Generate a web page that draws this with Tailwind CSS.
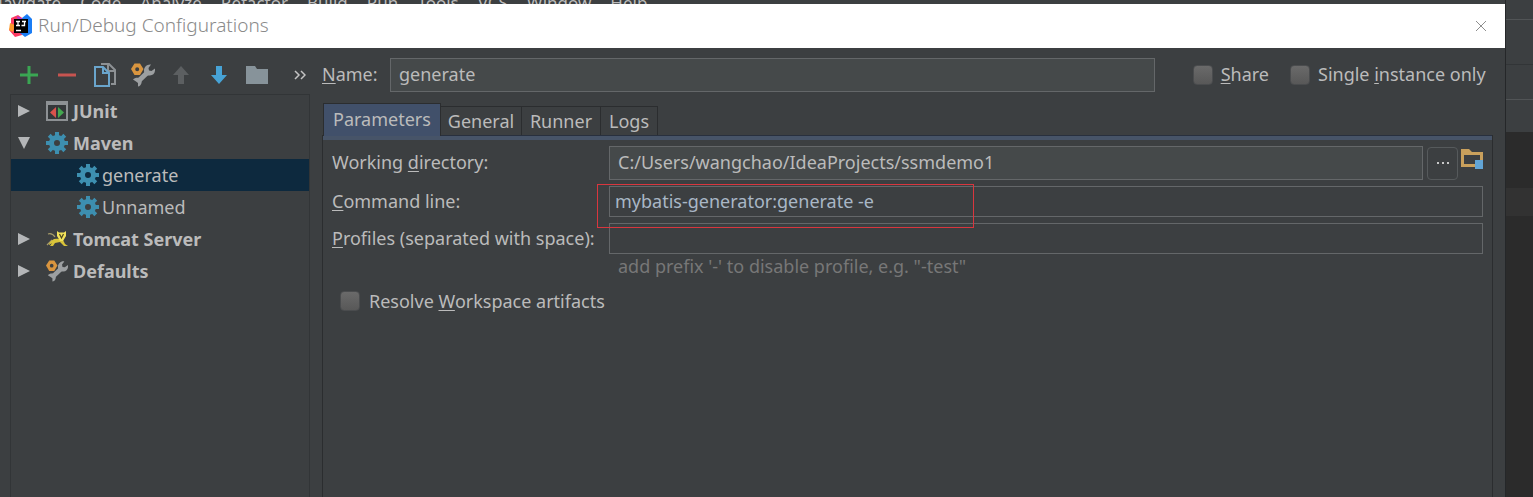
<!DOCTYPE html>
<html lang="en">
<head>
  <meta charset="UTF-8" />
  <meta name="viewport" content="width=device-width, initial-scale=1.0"/>
  <title>Run/Debug Configurations</title>
  <script src="https://cdn.jsdelivr.net/npm/@tailwindcss/browser@4"></script>
</head>
<body class="min-h-screen flex flex-col bg-[#3c3f41] text-[#bbbbbb] text-[18px] leading-6 font-['Noto_Sans','Open_Sans',sans-serif] overflow-hidden">

  <!-- shared icons -->
  <svg class="hidden">
    <symbol id="gear" viewBox="0 0 22 22">
      <g fill="#3d8fb0">
        <path fill-rule="evenodd" d="M11 3a8 8 0 1 1 0 16 8 8 0 0 1 0-16zm0 5a3 3 0 1 0 0 6 3 3 0 0 0 0-6z"/>
        <path d="M9 0h4v4H9zM9 18h4v4H9zM0 9h4v4H0zM18 9h4v4h-4z"/>
        <path d="M9 0h4v4H9zM9 18h4v4H9zM0 9h4v4H0zM18 9h4v4h-4z" transform="rotate(45 11 11)"/>
      </g>
    </symbol>
    <symbol id="wrench" viewBox="0 0 24 24">
      <path d="M8 17.500 17 9" stroke="#9c9fa1" stroke-width="5" fill="none"/>
      <path d="M20 1.500 17.500 5l.5 2.500 2.500.5 3.500-2.500c.5 4-1.500 7-5 7-3.500.4-6-1.500-6-5 0-3.500 3-6.500 7-6z" fill="#9c9fa1"/>
      <path d="M2 16.500c2-2 6-2.500 8 0 1.500 2 .5 6.500-3 7V20l-2-1.500z" fill="#9c9fa1"/>
      <path fill-rule="evenodd" d="M3.500.5h5.500l3.500 5.500-3.500 6H3.500L0 6z M6.200 4.200a2 2 0 1 0 0 4 2 2 0 0 0 0-4z" fill="#d9953f"/>
    </symbol>
  </svg>

  <div class="flex grow">
    <div class="flex flex-col grow min-w-0">

      <!-- menu bar, mostly covered by the dialog -->
      <nav class="h-1 overflow-hidden flex items-end gap-[19px] bg-[#3c3f41] text-[17px] whitespace-nowrap">
        <span class="-ml-[10px] -mb-[11px]">Navigate</span>
        <span class="-mb-[11px]">Code</span>
        <span class="-mb-[11px]">Analyze</span>
        <span class="-mb-[11px]">Refactor</span>
        <span class="-mb-[11px]">Build</span>
        <span class="-mb-[11px]">Run</span>
        <span class="-mb-[11px]">Tools</span>
        <span class="-mb-[11px]">VCS</span>
        <span class="-mb-[11px]">Window</span>
        <span class="-mb-[11px]">Help</span>
      </nav>

      <!-- title bar -->
      <header class="h-11 bg-white flex items-center pl-[9px] pr-[18px]">
        <svg class="w-6 h-6" viewBox="0 0 24 24">
          <path d="M2 4 9 1l7 5-3 15-7 2-6-7 2-4z" fill="#fc3b64"/>
          <path d="M1 9l5 2-2 7-4-2z" fill="#fd9a2b"/>
          <path d="M13 4l5-4 5 5v14l-7 4-5-4z" fill="#1a7df5"/>
          <path d="M8 2l6 3-5 3z" fill="#b33bd0"/>
          <path d="M5 5h14v14H5z" fill="#000"/>
          <path d="M7 7.500h4M9 7.500v4M7 11.500h4M13 7.500h4M15.500 7.500v4h-3M7 16.500h5" stroke="#fff" stroke-width="1.300" fill="none"/>
        </svg>
        <h1 class="ml-[5px] pb-[2px] text-[19px] text-[#8a8a8a] font-light">Run/Debug Configurations</h1>
        <button class="ml-auto p-0" aria-label="Close">
          <svg class="w-3 h-3" viewBox="0 0 12 12"><path d="M1 1l10 10M11 1 1 11" stroke="#8e8e8e" fill="none"/></svg>
        </button>
      </header>

      <div class="flex grow">

        <!-- left: toolbar + tree -->
        <aside class="w-[322px] shrink-0 pl-[10px] pr-3 flex flex-col">
          <div class="flex items-center h-[46px] pt-2">
            <button class="w-[38px] shrink-0 flex justify-center" aria-label="Add"><svg class="w-[18px] h-[18px]" viewBox="0 0 18 18"><path d="M9 0v18M0 9h18" stroke="#3aa653" stroke-width="3"/></svg></button>
            <button class="w-[38px] shrink-0 flex justify-center" aria-label="Remove"><svg class="w-[18px] h-[18px]" viewBox="0 0 18 18"><path d="M0 9h18" stroke="#c75450" stroke-width="3"/></svg></button>
            <button class="w-[38px] shrink-0 flex justify-center" aria-label="Copy">
              <svg class="w-[22px] h-6" viewBox="0 0 22 24" fill="none" stroke-width="2">
                <path d="M7 1h8l6 6v14h-4M14 1v7h7" stroke="#8d9194"/>
                <path d="M1 4h8l6 6v13H1z" fill="#3c3f41" stroke="#6aa5cc"/><path d="M9 4v6h6" stroke="#6aa5cc"/>
              </svg>
            </button>
            <button class="w-[38px] shrink-0 flex justify-center" aria-label="Edit defaults"><svg class="w-6 h-6"><use href="#wrench"/></svg></button>
            <button class="w-[38px] shrink-0 flex justify-center" aria-label="Move up"><svg class="w-4 h-[18px]" viewBox="0 0 16 18"><path d="M8 0l8 9h-5v9H5V9H0z" fill="#5c5f61"/></svg></button>
            <button class="w-[38px] shrink-0 flex justify-center" aria-label="Move down"><svg class="w-4 h-[18px]" viewBox="0 0 16 18"><path d="M8 18l8-9h-5V0H5v9H0z" fill="#47a3d6"/></svg></button>
            <button class="w-[38px] shrink-0 flex justify-center" aria-label="New folder"><svg class="w-[22px] h-[18px]" viewBox="0 0 22 18"><path d="M0 0h9l2 3h11v15H0z" fill="#87939a"/></svg></button>
            <button class="grow flex justify-end pr-1" aria-label="More"><svg class="w-3 h-[10px]" viewBox="0 0 12 10"><path d="M1 1l4 4-4 4M7 1l4 4-4 4" stroke="#c4c4c4" stroke-width="1.500" fill="none"/></svg></button>
          </div>

          <ul class="grow border border-b-0 border-[#323537]">
            <li class="h-8 flex items-center pl-[7px] font-bold">
              <svg class="w-3 h-3 mr-4" viewBox="0 0 12 12"><path d="M0 0l12 6-12 6z" fill="#b4b6b8"/></svg>
              <svg class="w-[22px] h-5 mr-[5px]" viewBox="0 0 22 20"><path d="M1 1h20v18H1z" fill="#34383a" stroke="#8d9194" stroke-width="2"/><path d="M0 0h22v4H0z" fill="#8d9194"/><path d="M10 6v11l-6-5.500z" fill="#d9534c"/><path d="M12 6v11l6-5.500z" fill="#43a84f"/></svg>
              JUnit
            </li>
            <li class="h-8 flex items-center pl-[7px] font-bold">
              <svg class="w-3 h-3 mr-4" viewBox="0 0 12 12"><path d="M0 0h12L6 12z" fill="#b4b6b8"/></svg>
              <svg class="w-[22px] h-[22px] mr-[5px]"><use href="#gear"/></svg>
              Maven
            </li>
            <li class="h-8 flex items-center pl-[66px] bg-[#0d293e]"><svg class="w-[22px] h-[22px] mr-[3px]"><use href="#gear"/></svg>generate</li>
            <li class="h-8 flex items-center pl-[66px]"><svg class="w-[22px] h-[22px] mr-[3px]"><use href="#gear"/></svg>Unnamed</li>
            <li class="h-8 flex items-center pl-[7px] font-bold">
              <svg class="w-3 h-3 mr-4" viewBox="0 0 12 12"><path d="M0 0l12 6-12 6z" fill="#b4b6b8"/></svg>
              <svg class="w-[22px] h-4 mr-[5px]" viewBox="0 0 22 16">
                <path d="M2 3c3-1 5 0 7 3M1 14l5-5" stroke="#a89c6a" stroke-width="1.200" fill="none"/>
                <path d="M3 13c2-4 5-6 10-5l4 1 2 4 3 2h-4l-4-4-5 1-2 3H4l2-3-3 2z" fill="#d9c43a"/>
                <path d="M11 0l2 1.500h5L20 0v5l-3 5h-3l-3-5z" fill="#f2e25a"/>
                <path d="M13.500 3l2 4 2-4" stroke="#4a4520" stroke-width="1.200" fill="none"/>
              </svg>
              Tomcat Server
            </li>
            <li class="h-8 flex items-center pl-[7px] font-bold">
              <svg class="w-3 h-3 mr-4" viewBox="0 0 12 12"><path d="M0 0l12 6-12 6z" fill="#b4b6b8"/></svg>
              <svg class="w-[22px] h-[22px] mr-[5px]"><use href="#wrench"/></svg>
              Defaults
            </li>
          </ul>
        </aside>

        <!-- right: configuration form -->
        <main class="grow min-w-0 flex flex-col pr-3">
          <div class="flex items-center pt-[10px] pr-[3px]">
            <label for="name" class="w-[68px] pb-[2px]"><u class="underline-offset-2">N</u>ame:</label>
            <input id="name" type="text" value="generate" class="grow min-w-0 h-[34px] px-2 pb-[2px] bg-[#45494a] border border-[#646769]">
            <input id="share" type="checkbox" class="appearance-none ml-[38px] size-5 rounded-sm bg-linear-to-b from-[#6a6a6a] to-[#585858] border border-[#4a4c4e]">
            <label for="share" class="ml-2 pb-[2px]"><u class="underline-offset-2">S</u>hare</label>
            <input id="single" type="checkbox" class="appearance-none ml-[21px] size-5 rounded-sm bg-linear-to-b from-[#6a6a6a] to-[#585858] border border-[#4a4c4e]">
            <label for="single" class="ml-2 w-[172px] pb-[2px]">Single <u class="underline-offset-2">i</u>nstance only</label>
          </div>

          <div class="flex items-end mt-[11px] pl-px" role="tablist">
            <button role="tab" aria-selected="true" class="relative h-[33px] -mb-px w-[118px] pb-[2px] bg-[#41506a] border border-b-0 border-[#2b2d2f]">Parameters</button>
            <button role="tab" class="h-[29px] w-[81px] border border-l-0 border-b-0 border-[#2b2d2f]">General</button>
            <button role="tab" class="h-[29px] w-[79px] border border-l-0 border-b-0 border-[#2b2d2f]">Runner</button>
            <button role="tab" class="h-[29px] w-[57px] border border-l-0 border-b-0 border-[#2b2d2f]">Logs</button>
          </div>

          <section class="grow border-x border-[#2b2d2f]">
            <div class="h-[5px] bg-[#475468] border-t border-[#28303e]"></div>
            <div class="pt-[6px] pl-[9px] pr-[9px]">
              <div class="flex items-center">
                <label for="dir" class="w-[277px] shrink-0 pb-[2px]">Working <u class="underline-offset-2">d</u>irectory:</label>
                <input id="dir" type="text" value="C:/Users/wangchao/IdeaProjects/ssmdemo1" class="grow min-w-0 h-[34px] px-2 pb-[2px] bg-[#45494a] border border-[#646769]">
                <button class="ml-1 w-[31px] h-[33px] rounded-sm border border-[#565a5c] flex items-center justify-center" aria-label="Browse">
                  <svg class="w-3 h-[2px]" viewBox="0 0 12 2"><path d="M0 0h2v2H0zM5 0h2v2H5zM10 0h2v2h-2z" fill="#c8c8c8"/></svg>
                </button>
                <button class="ml-[3px] mb-2" aria-label="Choose module">
                  <svg class="w-[22px] h-5" viewBox="0 0 22 20"><path fill-rule="evenodd" d="M0 0h8l3 3h11v15H0zM3 6v9h16V6z" fill="#c9a05c"/><path d="M14 11h8v9h-8z" fill="#62a5d6"/></svg>
                </button>
              </div>

              <div class="flex items-center mt-[6px]">
                <label for="cmd" class="w-[277px] shrink-0 pb-[2px]"><u class="underline-offset-2">C</u>ommand line:</label>
                <div class="grow relative flex">
                  <input id="cmd" type="text" value="mybatis-generator:generate -e" class="grow min-w-0 h-[31px] px-[5px] pb-[2px] text-[#a9b7c6] border border-[#646769]">
                  <div class="absolute -left-3 -top-[2px] w-[377px] h-11 border border-[#d9363e] pointer-events-none"></div>
                </div>
              </div>

              <div class="flex items-center mt-[6px]">
                <label for="profiles" class="w-[277px] shrink-0 pb-[2px]"><u class="underline-offset-2">P</u>rofiles (separated with space):</label>
                <input id="profiles" type="text" class="grow min-w-0 h-[31px] px-[5px] pb-[2px] border border-[#646769]">
              </div>
              <p class="pl-[286px] text-[#777777]">add prefix '-' to disable profile, e.g. "-test"</p>

              <div class="flex items-center mt-[11px] pl-2">
                <input id="resolve" type="checkbox" class="appearance-none size-5 rounded-sm bg-linear-to-b from-[#6a6a6a] to-[#585858] border border-[#4a4c4e]">
                <label for="resolve" class="ml-[9px]">Resolve <u class="underline-offset-2">W</u>orkspace artifacts</label>
              </div>
            </div>
          </section>
        </main>
      </div>
    </div>

    <!-- editor window behind the dialog -->
    <div class="w-7 shrink-0 flex flex-col bg-[#2b2b2b] border-l border-[#252729]">
      <div class="h-5 bg-[#3c3f41] border-b border-[#515456]"></div>
      <div class="h-[45px] bg-[#3c3f41] border-b border-[#323537]"></div>
      <div class="h-[35px] bg-[#3c3f41] border-b border-[#515456]"></div>
      <div class="h-8 bg-[#3c3f41]"></div>
      <div class="h-7 mt-14 bg-[#323232]"></div>
    </div>
  </div>

</body>
</html>
